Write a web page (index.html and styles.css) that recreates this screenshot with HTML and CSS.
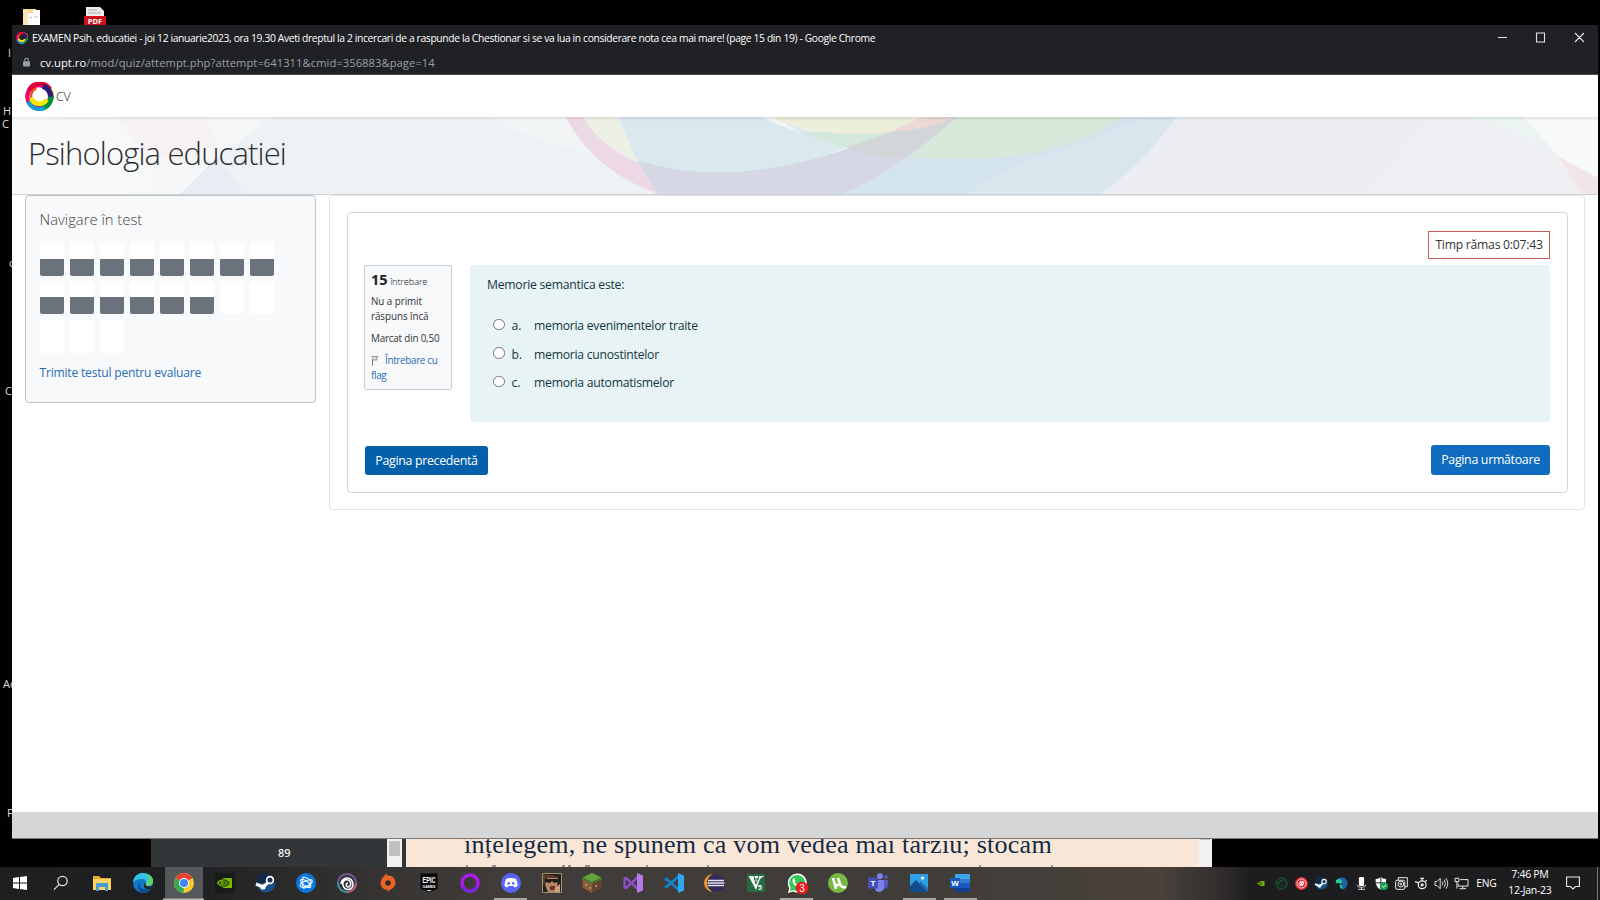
FILE: index.html
```html
<!DOCTYPE html>
<html lang="ro">
<head>
<meta charset="utf-8">
<title>Psihologia educatiei</title>
<link rel="stylesheet" href="styles.css">
</head>
<body>
<div class="desktop">
  <svg class="shortcut folder" viewBox="0 0 18 18"><path fill="#f3d98b" d="M0 1h13v17H0z"/><path fill="#f8e8b5" d="M0 2h5v16H0z"/><path fill="#fff" d="M5 5h5v13H5zM10 2h7v16h-7z"/><path stroke="#b8bcc0" d="M6 9l3 1M11 9h4" fill="none"/></svg>
  <svg class="shortcut pdf" viewBox="0 0 22 18"><path fill="#eee" d="M2 0h14l4 4v6H2z"/><path stroke="#aaa" d="M4 3h9M4 6h13"/><path fill="#d0111b" d="M0 9h22v9H0z"/><text x="11" y="16.7" text-anchor="middle" class="pdf-label">PDF</text></svg>
  <span class="desk-label l1">I</span><span class="desk-label l2">H</span><span class="desk-label l3">C</span><span class="desk-label l4">c</span><span class="desk-label l5">C</span><span class="desk-label l6">Ac</span><span class="desk-label l7">F</span>

  <div class="reader">
    <div class="reader-side">89</div>
    <div class="reader-scroll"><i></i></div>
    <div class="reader-page">
      <p>înțelegem, ne spunem că vom vedea mai târziu; stocăm</p>
      <svg class="next-line" viewBox="0 0 792 2"><path stroke="#6f7a8c" stroke-width="1.4" d="M60 1h2M86 1h4M156 1h3M162 1h3M179 1h5M240 1h2M301 1h2M573 1h2M645 1h2"/></svg>
    </div>
    <div class="reader-scroll right"><i></i></div>
  </div>

  <div class="window">
    <div class="titlebar">
      <svg class="favicon" viewBox="0 0 28 28"><use href="#ring"/></svg>
      <span class="title">EXAMEN Psih. educatiei - joi 12 ianuarie2023, ora 19.30 Aveti dreptul la 2 incercari de a raspunde la Chestionar si se va lua in considerare nota cea mai mare! (page 15 din 19) - Google Chrome</span>
      <svg class="controls" viewBox="0 0 100 14"><path fill="none" stroke="#e4e4e4" stroke-width="1.1" d="M6 7.5h9M44.5 3h8v9h-8zM83 3l9 9M92 3l-9 9"/></svg>
    </div>
    <div class="urlbar">
      <svg class="lock" viewBox="0 0 8 10"><rect y="4" width="8" height="6" rx="1" fill="#9aa0a6"/><path d="M2 4V2.6a2 2 0 014 0V4" fill="none" stroke="#9aa0a6" stroke-width="1.2"/></svg>
      <span class="url"><b>cv.upt.ro</b>/mod/quiz/attempt.php?attempt=641311&amp;cmid=356883&amp;page=14</span>
    </div>
    <div class="navbar">
      <svg class="logo" viewBox="0 0 28 28">
        <defs><g id="ring" fill="none">
          <circle cx="15.6" cy="12.6" r="11" stroke="#ffef3a" stroke-width="3"/>
          <circle cx="13.2" cy="14" r="11" stroke="#e6007e" stroke-width="4"/>
          <path d="M4 8A11.5 11.5 0 0124 7" stroke="#e2003c" stroke-width="4.5"/>
          <path d="M17 4a11 11 0 018 12" stroke="#2a1a7c" stroke-width="5"/>
          <path d="M25 14a11 11 0 01-10 11.5" stroke="#00913f" stroke-width="5"/>
          <path d="M19 25A12 12 0 013 19" stroke="#159bd7" stroke-width="4"/>
          <path d="M21 17a8.5 8.5 0 01-15-1" stroke="#f6e800" stroke-width="4.5"/>
          <path d="M6 15a8 8 0 015-9" stroke="#f0541e" stroke-width="2.5"/>
        </g></defs>
        <use href="#ring"/>
      </svg>
      <span class="brand">CV</span>
    </div>
    <header class="hero">
      <svg class="hero-art" viewBox="12 117 1586 77" preserveAspectRatio="none">
        <defs><linearGradient id="bg" x2="1"><stop stop-color="#fafafa"/><stop offset=".16" stop-color="#f4f6f7"/><stop offset=".3" stop-color="#ebf2f5"/><stop offset=".5" stop-color="#edf4f5"/></linearGradient>
        <linearGradient id="shade" x2="0" y2="1"><stop stop-color="#000" stop-opacity=".09"/><stop offset="1" stop-color="#000" stop-opacity="0"/></linearGradient></defs>
        <path fill="url(#bg)" d="M12 117h1586v77H12z"/>
        <path fill="#f7f3f5" d="M115 117h91l12 30-40 15-33-10z"/>
        <path fill="#edf2f5" d="M273 117h294q28 50 90 77H180l38-37z"/>
        <path fill="#e9edf3" d="M218 157l-38 37h64z"/>
        <path fill="#f2f5f6" d="M490 117h77l20 35q-60-12-97-35z"/>
        <path fill="#edf0e4" d="M583 117h35l21 46q-40-15-56-46z"/>
        <path fill="#ecd9e5" d="M566 117h17q17 30 56 46l18 31q-65-25-91-77z"/>
        <path fill="#dae9ee" d="M618 117h155l75 30q-70 28-140 26-40-2-71-13z"/>
        <path fill="#d3e4ec" d="M842 194q60-30 115-77h219q-27 41-75 77z"/>
        <path fill="#d9e6ee" d="M968 194q30-25 80-40 50-15 95-37h33q-27 41-75 77z"/>
        <path fill="#d3e7dc" d="M803 133l120-16h199q-60 42-165 42-100-2-154-26z"/>
        <path fill="#d7e9da" d="M957 117h165q-60 42-165 42-30 0-58-3z"/>
        <path fill="#ecedda" d="M769 117h153l-31 15q-70 8-122-15z"/>
        <path fill="#f1f5f3" d="M763 117h10q15 9 30 16-25-7-40-16z"/>
        <path fill="#d5d8e4" d="M637 160q105 35 254-28l66-15q-58 53-115 77H657z"/>
        <path fill="#d2d6d8" d="M846 148l45-16 66-15q-30 26-58 42-33-3-53-11z"/>
        <path fill="#ecd9d7" d="M922 117h35q-30 13-66 15z"/>
        <path fill="#ebedf2" d="M1176 117h299l84 40 23 37h-481q48-36 75-77z"/>
        <path fill="#efeff3" d="M1430 117h45l84 40 23 37h-220z"/>
        <path fill="#ecf3f3" d="M1462 117h62l35 40q-50-28-97-40z"/>
        <path fill="#f8f9f9" d="M1524 117h74v61l-39-21z"/>
        <path fill="#f2e5e8" d="M1559 157l39 21v16h-16z"/>
        <path fill="url(#shade)" d="M12 117h1586v4H12z"/>
      </svg>
      <h1>Psihologia educatiei</h1>
    </header>
    <main class="content">
      <aside class="quiz-nav">
        <h2>Navigare în test</h2>
        <div class="cells">
          <i class="done"></i><i class="done"></i><i class="done"></i><i class="done"></i><i class="done"></i><i class="done"></i><i class="done"></i><i class="done"></i>
          <i class="done"></i><i class="done"></i><i class="done"></i><i class="done"></i><i class="done"></i><i class="done"></i><i></i><i></i>
          <i></i><i></i><i></i>
        </div>
        <a class="submit">Trimite testul pentru evaluare</a>
      </aside>
      <section class="region">
        <div class="card">
          <div class="timer-row"><div class="timer">Timp rămas 0:07:43</div></div>
          <div class="question">
            <div class="info">
              <div class="number"><b>15</b> <span>întrebare</span></div>
              <div class="state">Nu a primit<br>răspuns încă</div>
              <div class="grade">Marcat din 0,50</div>
              <div class="flag"><svg viewBox="0 0 8 11"><path d="M1.500 1v9.500" stroke="#777" fill="none"/><path d="M.5 1.500h6.500l-1.500 2 .5 1.500H2" stroke="#888" fill="#ddd" stroke-width=".9"/></svg><a>Întrebare cu</a><br><a>flag</a></div>
            </div>
            <div class="formulation">
              <p>Memorie semantica este:</p>
              <div class="answer"><i></i><span class="let">a.</span><span class="choice">memoria evenimentelor traite</span></div>
              <div class="answer"><i></i><span class="let">b.</span><span class="choice">memoria cunostintelor</span></div>
              <div class="answer"><i></i><span class="let">c.</span><span class="choice">memoria automatismelor</span></div>
            </div>
          </div>
          <div class="buttons"><span class="btn prev">Pagina precedentă</span><span class="btn next">Pagina următoare</span></div>
        </div>
      </section>
    </main>
    <div class="status-strip"></div>
  </div>

  <div class="taskbar">
    <div class="apps">
      <span><svg viewBox="0 0 20 20"><path fill="#fff" d="M3 5l6-1v5.600H3zM10 3.900l7-.9v6.600h-7zM3 10.400h6V16l-6-1zM10 10.400h7V17l-7-.9z"/></svg></span>
      <span><svg viewBox="0 0 20 20" fill="none" stroke="#e8e8e8" stroke-width="1.200"><circle cx="11.500" cy="8" r="4.700"/><path d="M8.200 11.400L3 16.600"/></svg></span>
      <span><svg viewBox="0 0 20 20"><path fill="#e8a92d" d="M1 3h6l2 2h10v4H1z"/><path fill="#fcd462" d="M1 6h18v11H1z"/><path fill="#4a9bd4" d="M4 10h12v8h-3v-4H7v4H4z"/></svg></span>
      <span><svg viewBox="0 0 20 20"><circle cx="10" cy="10" r="10" fill="#1577c8"/><path fill="#33c3e8" d="M0 9C1 2 6 0 10 0c6 0 10 4 10 8 0 4-3 5-6 5-2 0-2-1-1-2 1-3-1-5-4-5-4 0-7 1-9 3z"/><path fill="#60d565" d="M14 1c4 1 6 4 6 7 0 4-3 5-6 5-1 0-2-1-1-2l2-4c1-3 0-5-1-6z"/><path fill="#0c4c91" d="M7 9c-2 5 2 9 11 7-2 3-5 4-8 4-4-1-7-6-3-11z"/><path fill="#262728" d="M12 10c0 3 4 5 8 2l-1 4c-4 1-9 0-8-5z"/></svg></span>
      <span class="active"><svg viewBox="0 0 20 20"><circle cx="10" cy="10" r="10" fill="#fcc934"/><path fill="#ea4335" d="M10 10L1.400 5a10 10 0 0117.200 0z"/><path fill="#34a853" d="M10 10L9.500 20A10 10 0 011.400 5z"/><circle cx="10" cy="10" r="5" fill="#fff"/><circle cx="10" cy="10" r="4" fill="#4285f4"/></svg></span>
      <span><svg viewBox="0 0 20 20"><path fill="#191b17" d="M0 0h20v20H0z"/><g id="nv"><path fill="#76b900" d="M8 5h9v10H8z"/><path d="M2.500 10q5-6 11.500 0-5.500 6-11.500 0M6 10q2-3 5 0-2 3-5 0" fill="none" stroke="#76b900" stroke-width="1.500"/><path d="M8 6.800q4 .2 6 3.200-2 3-6 3.200M8 8.800q2 0 3 1.200-1 1.200-3 1.200" fill="none" stroke="#20300a" stroke-width="1.100"/></g></svg></span>
      <span><svg viewBox="0 0 20 20"><g id="steam"><circle cx="10" cy="10" r="9.500" fill="#17508a"/><path fill="#10284b" d="M.5 10a9.500 9.500 0 0119 0z"/><path d="M0 11l7 3 7-6" stroke="#fff" stroke-width="3" fill="none"/><circle cx="14" cy="7" r="3.400" fill="#18355a" stroke="#fff" stroke-width="1.700"/><circle cx="7" cy="14" r="2.600" fill="#fff"/></g></svg></span>
      <span><svg viewBox="0 0 20 20"><circle cx="10" cy="10" r="10" fill="#0a76df"/><g fill="none" stroke="#e6f5ff" stroke-width="1.200"><path d="M7 4q-2 7 1 12M7 4q7 1 8 6-2 5-8 5"/><ellipse cx="10" cy="10.500" rx="6.500" ry="2.600" transform="rotate(-25 10 10)"/><ellipse cx="10" cy="10.500" rx="6" ry="2.400" transform="rotate(35 10 10)"/></g></svg></span>
      <span><svg viewBox="0 0 20 20"><circle cx="10" cy="10" r="10" fill="#7a5a9b"/><path fill="#3298a2" d="M0 10a10 10 0 0010 10V10z"/><path fill="#c65b7c" d="M20 10A10 10 0 0110 20V10z"/><circle cx="10" cy="10" r="8" fill="#303237"/><path fill="none" stroke="#fff" stroke-width="1.600" d="M4 11a6 6 0 1112 0 5 5 0 01-10 1 4 4 0 117 1 2 2 0 11-2-3"/></svg></span>
      <span><svg viewBox="0 0 20 20"><path fill="#ec6326" d="M9.500 0L8.500 2.500q8-1 9 6.500 0 6-6 8l-2.500 3 1-3q-7-.5-7.500-7 1-6 7-10z"/><circle cx="10" cy="10" r="2.700" fill="#332d2a"/></svg></span>
      <span><svg viewBox="0 0 20 20"><path fill="#080808" stroke="#4b4b4b" stroke-width=".5" d="M1 1q0-1 1-1h16q1 0 1 1v15l-9 4-9-4z"/><text x="3.500" y="10.300" class="epic" textLength="13" lengthAdjust="spacingAndGlyphs">EPIC</text><text x="10" y="14.500" class="games">GAMES</text><path d="M7 17h6l-3 1.500z" fill="#ddd"/></svg></span>
      <span><svg viewBox="0 0 20 20"><circle cx="10" cy="10" r="8" fill="none" stroke="#a81be8" stroke-width="3.600"/><path d="M3 14a8 8 0 0014 0" fill="none" stroke="#7427d4" stroke-width="3.600"/></svg></span>
      <span class="open"><svg viewBox="0 0 20 20"><circle cx="10" cy="10" r="10" fill="#5865f2"/><path fill="#fff" d="M5 6q5-2 10 0 2 4 1.500 7-2 1.500-3 1.400L12.600 13H7.400l-.9 1.400q-1 .1-3-1.400Q3.500 9 5 6z"/><circle cx="7.700" cy="10.400" r="1.300" fill="#5865f2"/><circle cx="12.300" cy="10.400" r="1.300" fill="#5865f2"/></svg></span>
      <span><svg viewBox="0 0 20 20"><path fill="#24201c" stroke="#a79070" d="M.5.500h19v19H.5z"/><path fill="#b98763" d="M5 5h11l-1 10-4 4H6L3 12z"/><path fill="#1f1a17" d="M4 6h12v3l-4 1-2-2-2 2-4-1z"/><path fill="#6a332a" d="M8 13h5v4H8z"/><path fill="#5c3b29" d="M1 2h10l6 3H3v6H1z"/><path fill="#c9a07e" d="M13 15l5-4v8h-6z"/></svg></span>
      <span><svg viewBox="0 0 20 20"><path fill="#63a33b" d="M10 0l9.500 4.500L10 9 .5 4.500z"/><path fill="#8a5b3b" d="M.5 5L10 9v11L.5 15z"/><path fill="#66422c" d="M19.500 5L10 9v11l9.500-5z"/><path fill="#467a2b" d="M.5 4.500L10 9l9.500-4.500V8l-3-1-2 3-2-1-2.500 3-3-3-2 0-2-2-2.500 0z"/><path fill="#b58a62" d="M3 11h2v2H3zM7 14h2v2H7zM13 12h2v2h-2z"/></svg></span>
      <span><svg viewBox="0 0 20 20"><path d="M1 6l2-1 12 11M1 14l2 1L15 4M1.500 6v8" fill="none" stroke="#8a50c5" stroke-width="2.400"/><path fill="#b37be8" d="M14 0l6 2.500v15L14 20z"/></svg></span>
      <span><svg viewBox="0 0 20 20"><path d="M1 7l1.500-1L15 17M1 13l1.500 1L15 3" fill="none" stroke="#1583cc" stroke-width="2.800"/><path fill="#2ea7ee" d="M14 0l6 2.500v15L14 20z"/></svg></span>
      <span><svg viewBox="0 0 20 20"><path fill="#f2932c" d="M8 1a9 9 0 000 18 10 10 0 010-18z"/><circle cx="11" cy="10" r="8.800" fill="#31285b"/><path d="M3 7.500h16M2.500 10h17M3 12.500h16" stroke="#e8e5f0" stroke-width="1.300"/></svg></span>
      <span><svg viewBox="0 0 20 20"><path fill="#276a3f" d="M1 1h18v18H1z"/><path fill="#f2f8f3" d="M2.500 3H18l-4 3-4 11z"/><path d="M8 3l2 8 3-8M8 6h5" stroke="#276a3f" fill="none"/><text x="14" y="17" class="five">5</text></svg></span>
      <span class="open"><svg viewBox="0 0 20 20"><path fill="#fff" d="M1 20l1.200-5A9.500 9.500 0 116 18.500z"/><path fill="#35c759" d="M2.800 18.200l.9-3.500A8 8 0 116.300 17z"/><path fill="#fff" d="M7 5l1.500 3-.9 1q1 2 3 3l1-1 2.500 1q-.5 3-3 2.500Q6 12 5.400 8 5.500 5.500 7 5z"/><circle cx="15" cy="15" r="6.300" fill="#f01818"/><text x="15" y="18.600" class="badge">3</text></svg></span>
      <span><svg viewBox="0 0 20 20"><circle cx="10" cy="10" r="10" fill="#78b943"/><path d="M5 5l3 11M6 9q2 5 6 2l-2-6M12 11q1 4 6 3" fill="none" stroke="#fff" stroke-width="2.500"/></svg></span>
      <span><svg viewBox="0 0 20 20"><circle cx="12" cy="3.200" r="3" fill="#7b83eb"/><circle cx="18" cy="4" r="2" fill="#5059c9"/><path fill="#5059c9" d="M15 7h5v6q-1 3-5 3z"/><path fill="#7b83eb" d="M7 7h9v8q-1 4-5 4t-4-4z"/><path fill="#4650b4" d="M0 4.500h10v11H0z"/><text x="5" y="13" class="app-t">T</text></svg></span>
      <span class="open"><svg viewBox="0 0 20 20"><path fill="#2f9fe5" d="M1 1h18v18H1z"/><path fill="#144b8d" d="M1 13l6-6 12 12H1z"/><path fill="#1f67b4" d="M10 10l2-1 7 6v4z"/><circle cx="13.500" cy="5" r="1.600" fill="#fff"/></svg></span>
      <span class="open"><svg viewBox="0 0 20 20"><path fill="#41a5ee" d="M5 1h15v5H5z"/><path fill="#2b7cd3" d="M5 6h15v4.500H5z"/><path fill="#185abd" d="M5 10.500h15V15H5z"/><path fill="#103f91" d="M5 15h15v4H5z"/><path fill="#185abd" d="M0 5h10v10H0z"/><text x="5" y="12.800" class="app-w">W</text></svg></span>
    </div>
    <div class="tray">
      <span><svg class="sm" viewBox="0 0 20 20"><use href="#nv"/></svg></span>
      <span><svg viewBox="0 0 20 20" fill="none" stroke="#23613f" stroke-width="1.500"><circle cx="10" cy="10" r="8.500" fill="#172820"/><path d="M5 12q0-6 7-7"/></svg></span>
      <span><svg viewBox="0 0 20 20"><circle cx="10" cy="10" r="10" fill="#e02b33"/><circle cx="10" cy="10" r="7" fill="none" stroke="#fff" stroke-width="1.200"/><path d="M6 12l3-5 2 6 3-5M7 14l6-8" stroke="#fff" fill="none" stroke-width="1.600"/></svg></span>
      <span><svg viewBox="0 0 20 20"><use href="#steam"/></svg></span>
      <span><svg viewBox="0 0 20 20"><path fill="#1668a5" d="M4 2q10-4 15 4 2 9-7 14-3-4-1-9z"/><path fill="#26c6a2" d="M1 5q7-4 10 1l-2 5-4-2-3 1zM7 12l4 0v7q-4-2-4-7z"/></svg></span>
      <span><svg viewBox="0 0 20 20"><rect x="6" width="8" height="14" rx="2" fill="#fff"/><path d="M3 12q1 4 7 4t7-4M10 16v3M5 19h10" fill="none" stroke="#ddd" stroke-width="1.500"/></svg></span>
      <span><svg viewBox="0 0 20 20"><path fill="#fff" d="M1 3q5 0 8-3 3 3 8 3 1 12-8 17Q0 15 1 3z"/><path d="M9 0v20M1 9h17" stroke="#252525" stroke-width="1.500"/><circle cx="14" cy="14" r="6" fill="#18a154"/><path d="M11 14l2 2 4-4" stroke="#fff" fill="none" stroke-width="1.500"/></svg></span>
      <span><svg viewBox="0 0 20 20" fill="none" stroke="#eee" stroke-width="1.500"><path d="M5 5V1h14v14h-4"/><rect x="1" y="5" width="14" height="14" rx="2"/><circle cx="9" cy="11" r="4.500"/><circle cx="9" cy="11" r="1.500"/></svg></span>
      <span><svg viewBox="0 0 20 20" fill="none" stroke="#eee" stroke-width="1.900"><circle cx="11" cy="12" r="6"/><circle cx="11" cy="12" r="1.600"/><path d="M0 7l6 2M11 6V2M8 2h6M16 7l2-2"/></svg></span>
      <span><svg viewBox="0 0 20 20" fill="none" stroke="#eee" stroke-width="1.400"><path d="M0 7h3l5-5v16l-5-5H0zM11 7q2 3 0 6M14 4q4 6 0 12M17 2q5 8 0 16"/></svg></span>
      <span><svg viewBox="0 0 20 20" fill="none" stroke="#eee" stroke-width="1.500"><path d="M8 4h12v10H5v-4M12 14v4M7 18h10"/><path d="M0 2h6v5H0zM3 7v11"/></svg></span>
    </div>
    <span class="lang">ENG</span>
    <div class="clock"><span>7:46 PM</span><span class="date">12-Jan-23</span></div>
    <svg class="notif" viewBox="0 0 14 14"><path d="M.6 1h12.800v9.500H9.500L7 13l-2.500-2.500H.6z" fill="none" stroke="#eee" stroke-width="1.100"/></svg>
    <i class="peek"></i>
  </div>
</div>
</body>
</html>
```
FILE: styles.css
```css
* { box-sizing: border-box; }
body { margin: 0; font-family: "Open Sans", "Noto Sans", sans-serif; overflow: hidden; }
h1, h2, p { margin: 0; font-weight: 400; }
.desktop { position: relative; width: 1600px; height: 900px; background: #020001; overflow: hidden; }
.shortcut { position: absolute; }
.folder { left: 23px; top: 8px; width: 18px; height: 18px; }
.pdf { left: 84px; top: 7px; width: 22px; height: 18px; }
.pdf-label { font: 700 7.5px "Open Sans", sans-serif; fill: #fff; }
.desk-label { position: absolute; color: #ddd; font-size: 11px; line-height: 14px; }
.l1 { left: 8px; top: 46px; } .l2 { left: 3px; top: 104px; } .l3 { left: 2px; top: 117px; } .l4 { left: 9px; top: 256px; }
.l5 { left: 5px; top: 384px; } .l6 { left: 3px; top: 677px; } .l7 { left: 7px; top: 806px; }

.reader { position: absolute; left: 151px; top: 830px; width: 1061px; height: 37px; display: flex; background: #323639; }
.reader-side { width: 236px; padding: 15px 0 0 127px; font: 600 11px/16px "Open Sans", sans-serif; color: #eee; }
.reader-scroll { width: 15px; background: #f1f1f1; padding: 11px 2px 0; }
.reader-scroll i { display: block; height: 15px; background: #c1c1c1; }
.reader-scroll.right { width: 14px; padding: 0 2px; }
.reader-scroll.right i { height: 10px; }
.reader-page { width: 792px; margin-left: 4px; background: #fae6d6; overflow: hidden; }
.reader-page p { height: 35px; padding-left: 58px; font: 26.1px/29px "Liberation Serif", serif; color: #132b48; white-space: nowrap; letter-spacing: .2px; }
.next-line { display: block; width: 792px; height: 2px; }

.window { position: absolute; left: 12px; top: 25px; width: 1586px; height: 814px; display: flex; flex-direction: column; background: #fff; border-bottom: 1px solid #777; }
.titlebar { height: 25px; display: flex; align-items: center; background: #202124; color: #fff; padding-left: 4px; }
.favicon { width: 12px; height: 12px; margin-right: 4px; }
.title { font-size: 10.3px; line-height: 23px; padding-top: 2px; white-space: nowrap; letter-spacing: -.356px; }
.controls { width: 100px; height: 14px; margin-left: auto; margin-right: 6px; margin-bottom: 1px; }
.urlbar { height: 25px; display: flex; align-items: center; background: #202124; border-bottom: 1px solid #4a4b4e; padding-left: 11px; }
.lock { width: 7px; height: 10px; margin-right: 10px; }
.url { font-size: 11.2px; line-height: 22px; padding-top: 2px; color: #9aa0a6; letter-spacing: .05px; white-space: nowrap; }
.url b { font-weight: 400; color: #fff; }
.navbar { height: 42px; display: flex; align-items: center; padding-left: 13px; }
.logo { width: 29px; height: 29px; }
.brand { margin-left: 2px; font-size: 12.5px; font-weight: 300; color: #222; letter-spacing: -.3px; }
.hero { height: 78px; display: grid; border-bottom: 1px solid #cfd2d5; }
.hero-art { grid-area: 1 / 1; width: 1586px; height: 77px; }
.hero h1 { grid-area: 1 / 1; padding: 15px 0 0 16px; font-size: 31px; line-height: 42px; font-weight: 300; color: #2b2d31; letter-spacing: -.86px; }

.content { flex: 1; display: flex; align-items: flex-start; padding-left: 13px; }
.quiz-nav { width: 291px; height: 208px; border: 1px solid #bfc2c5; border-radius: 4px; background: #f8f9fb; padding: 13px 13.500px; }
.quiz-nav h2 { font-size: 14.8px; font-weight: 300; line-height: 20px; color: #444; }
.cells { display: grid; grid-template-columns: repeat(8, 24px); column-gap: 6px; row-gap: 5.300px; margin-top: 14px; }
.cells i { height: 33px; background: #fff; border-radius: 2px; }
.cells .done { background: linear-gradient(#fff 50%, #6a737b 50%); }
.submit { display: block; margin-top: 10.500px; font-size: 12.100px; line-height: 20px; color: #2a6cb5; letter-spacing: -.21px; }
.region { margin-left: 13px; width: 1256px; height: 315px; border: 1px solid #dfe1e3; border-radius: 4px; padding: 16px 17px; }
.card { width: 1221px; height: 281px; border: 1px solid #d3d5d7; border-radius: 4px; padding: 18px 17px 0 16px; }
.timer-row { display: flex; justify-content: flex-end; }
.timer { width: 122px; height: 28px; border: 1px solid #ca5c53; font-size: 12.200px; line-height: 26px; text-align: center; color: #333; letter-spacing: -.25px; white-space: nowrap; }
.question { display: flex; justify-content: space-between; margin-top: 6px; }
.info { width: 88px; height: 125px; border: 1px solid #cad0d7; border-radius: 2px; background: #f8f9fb; padding: 3px 6px; font-size: 9.900px; line-height: 15.200px; color: #333; white-space: nowrap; }
.number { line-height: 21px; }
.number b { font-size: 14.500px; color: #222; }
.number span { font-size: 9.400px; font-weight: 300; letter-spacing: -.2px; color: #111; }
.state { margin-top: 2px; letter-spacing: -.08px; }
.grade { margin-top: 7px; letter-spacing: -.2px; }
.flag { margin-top: 6px; color: #2a6cb5; letter-spacing: -.33px; }
.flag svg { width: 8px; height: 11px; margin-right: 6px; vertical-align: -2px; }
.formulation { width: 1080px; height: 157px; border-radius: 3px; background: #e7f3f5; padding: 10px 17px; color: #15373f; font-size: 12.200px; }
.formulation p { line-height: 20px; margin-bottom: 16.500px; letter-spacing: -.25px; }
.answer { display: flex; height: 28.400px; align-items: center; padding-left: 6px; white-space: nowrap; }
.answer i { width: 11.500px; height: 11.500px; border: 1px solid #767676; border-radius: 50%; background: #fff; margin-right: 7px; margin-top: -2px; }
.let { width: 22.500px; }
.choice { letter-spacing: -.25px; }
.buttons { display: flex; justify-content: space-between; align-items: center; margin-top: 23px; padding-left: 1px; height: 30px; }
.btn { height: 29px; line-height: 29px; border-radius: 3px; background: #0f6cbf; color: #fff; text-align: center; font-size: 12.400px; letter-spacing: -.32px; white-space: nowrap; }
.prev { width: 123px; background: #0560ab; }
.next { width: 119px; height: 30px; line-height: 30px; }
.status-strip { height: 26px; background: #d6d6d6; }

.taskbar { position: absolute; left: 0; top: 867px; width: 1600px; height: 33px; display: flex; background: linear-gradient(90deg, #1e1f21 0, #202123 200px, #353331 370px, #403c3a 500px, #3f3c39 900px, #49413b 1160px, #302d2c 1220px, #1d1d1f 1250px); }
.apps { display: flex; width: 981px; }
.apps span { width: 40.860px; height: 33px; display: flex; justify-content: center; padding-top: 6px; }
.apps svg { width: 20px; height: 20px; overflow: visible; }
.apps .active { background: linear-gradient(#55585a, #55585a) 50% 0 / 38px 100% no-repeat; box-shadow: inset 0 -1.500px #b9b9b9; }
.apps .open { background: linear-gradient(#aaa6a5, #aaa6a5) 50% 100% / 33px 2px no-repeat; }
.epic, .games, .badge, .app-t, .app-w { text-anchor: middle; fill: #fff; font: 700 8.500px "Liberation Sans", sans-serif; }
.epic { text-anchor: start; }
.games { font-size: 3.500px; }
.badge { font-size: 10px; font-weight: 400; }
.app-t, .app-w { font-size: 8px; }
.five { text-anchor: middle; fill: #fff; font: 700 7px "Liberation Sans", sans-serif; }
.tray { display: flex; margin-left: 270px; }
.tray span { width: 20.080px; display: flex; justify-content: center; align-items: center; }
.tray svg { width: 13px; height: 13px; overflow: visible; }
.tray .sm { width: 10px; }
.lang { width: 32px; margin-left: -3px; padding-left: 3px; text-align: center; font-size: 10.300px; line-height: 32px; color: #fff; letter-spacing: -.2px; }
.clock { width: 64px; margin: 0 4px 0 -3px; display: flex; flex-direction: column; align-items: center; color: #fff; font-size: 10.500px; line-height: 15.500px; letter-spacing: -.3px; white-space: nowrap; }
.notif { width: 14px; height: 14px; margin: 9px 0 0 0; }
.peek { width: 1px; height: 33px; background: #777; margin-left: auto; margin-right: 2px; }
```
